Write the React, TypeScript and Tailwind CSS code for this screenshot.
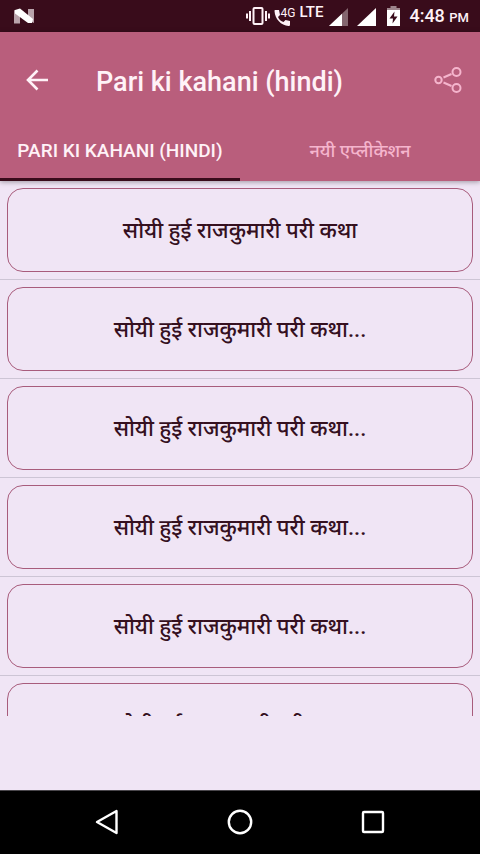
import * as React from "react";

const stories = [
  "सोयी हुई राजकुमारी परी कथा",
  "सोयी हुई राजकुमारी परी कथा...",
  "सोयी हुई राजकुमारी परी कथा...",
  "सोयी हुई राजकुमारी परी कथा...",
  "सोयी हुई राजकुमारी परी कथा...",
  "सोयी हुई राजकुमारी परी कथा...",
];

const tabs = [
  { id: "stories", label: "PARI KI KAHANI (HINDI)", textSize: "text-[19px]" },
  { id: "apps", label: "नयी एप्लीकेशन", textSize: "text-lg" },
];

function StatusBar() {
  return (
    <div className="flex h-8 shrink-0 items-center justify-between bg-[#390c1b] pr-[11px] pl-3.5 text-[#fff2f7]">
      <svg width="20" height="16" viewBox="0 0 20 16" aria-hidden="true">
        <path d="M0 2L6 4V15.500H0Z" fill="#b9a3ab" />
        <path d="M14 1H20V15L14 12Z" fill="#b9a3ab" />
        <path d="M1 2L6 0.500L19 11L18 15H14L1 5.500Z" fill="#fff" />
      </svg>
      <div className="flex h-full items-center">
        {/* Vibrate */}
        <svg width="24" height="20" viewBox="0 0 24 20" fill="none" stroke="#fff2f7" strokeWidth="2" aria-hidden="true">
          <rect x="7.500" y="2" width="9" height="16" rx="1" />
          <path d="M4 5V15M1 7.500V12.500M20 5V15M23 7.500V12.500" />
        </svg>
        {/* 4G call */}
        <div className="ml-1 flex h-full w-[22px] items-start">
          <svg className="mt-2 shrink-0" width="18" height="19" viewBox="0 0 18 19" fill="#fff2f7" aria-hidden="true">
            <path d="M1 2H5L6 7L4 9C5 11.500 7 13.500 9.500 14L11.500 12L16 13V16.500C16 17.500 15.500 18 14.500 18C7 17.500 1 11 0.500 3Q0.500 2 1 2Z" />
          </svg>
          <span className="-ml-[11px] mt-[7px] text-xs leading-3">4G</span>
        </div>
        <span className="ml-1 mb-2 text-[15px] leading-4 font-medium">LTE</span>
        <svg className="ml-1.5 mt-0.5" width="20" height="18" viewBox="0 0 20 18" aria-hidden="true">
          <path d="M0 18L19 0V18Z" fill="#84666f" />
          <path d="M0 18L13 5.700V18Z" fill="#fff" />
        </svg>
        <svg className="ml-2 mt-0.5" width="19" height="18" viewBox="0 0 19 18" aria-hidden="true">
          <path d="M0 18L19 0V18Z" fill="#fff" />
        </svg>
        <svg className="ml-[11px]" width="13" height="20" viewBox="0 0 13 20" aria-hidden="true">
          <path d="M3.500 0H9.500V2H13V5H0V2H3.500Z" fill="#9c858c" />
          <path d="M0 4H13V20H0Z" fill="#fff" />
          <path d="M7.500 5.500L2.500 12.500H6L5.500 17.500L10.500 10.500H7Z" fill="#390c1b" />
        </svg>
        <span className="ml-[9px] pt-0.5 text-lg leading-6 font-medium">
          4:48 <span className="text-[13px]">PM</span>
        </span>
      </div>
    </div>
  );
}

function Toolbar() {
  return (
    <div className="flex h-[88px] items-center pt-2 pr-4 pl-6">
      <button type="button" aria-label="Back" className="shrink-0">
        <svg width="26" height="24" viewBox="0 0 26 24" fill="none" stroke="#fff2f7" strokeWidth="2.600" aria-hidden="true">
          <path d="M24 12H4.500M13.500 2.500L4 12L13.500 21.500" />
        </svg>
      </button>
      <h1 className="ml-[46px] flex-1 truncate pt-1 text-[27px] leading-8 font-medium text-[#fff2f7]">
        Pari ki kahani (hindi)
      </h1>
      <button type="button" aria-label="Share" className="shrink-0">
        <svg width="30" height="28" viewBox="0 0 30 28" fill="none" stroke="#f5b5cd" strokeWidth="2" aria-hidden="true">
          <circle cx="4.500" cy="14" r="3.200" />
          <circle cx="22.500" cy="6" r="4" />
          <circle cx="22.500" cy="22" r="4" />
          <path d="M9.500 11.500L17.500 8M9.500 16.500L17.500 20" />
        </svg>
      </button>
    </div>
  );
}

function NavigationBar() {
  return (
    <nav className="flex h-16 shrink-0 items-center justify-center gap-[106px] border-t border-[#4a474c] bg-black pb-0.5">
      <button type="button" aria-label="Back">
        <svg width="28" height="28" viewBox="0 0 28 28" fill="none" stroke="#fff" strokeWidth="2.400" strokeLinejoin="round" aria-hidden="true">
          <path d="M23.500 3V25L4 14Z" />
        </svg>
      </button>
      <button type="button" aria-label="Home">
        <svg width="26" height="28" viewBox="0 0 26 28" fill="none" stroke="#fff" strokeWidth="2.400" aria-hidden="true">
          <circle cx="13" cy="14" r="11.200" />
        </svg>
      </button>
      <button type="button" aria-label="Recent apps">
        <svg width="28" height="28" viewBox="0 0 28 28" fill="none" stroke="#fff" strokeWidth="2.400" aria-hidden="true">
          <rect x="4" y="4" width="20" height="20" rx="1" />
        </svg>
      </button>
    </nav>
  );
}

export default function App() {
  const [activeTab, setActiveTab] = React.useState("stories");

  return (
    <div className="flex h-screen flex-col bg-[#f0e5f5] font-[Roboto,'Noto_Sans',sans-serif]">
      <StatusBar />

      <header className="z-10 shrink-0 bg-[#b95e7c] shadow-[0_1px_5px_rgba(0,0,0,0.35)]">
        <Toolbar />
        <div role="tablist" className="grid grid-cols-2">
          {tabs.map((tab) => (
            <button
              key={tab.id}
              type="button"
              role="tab"
              aria-selected={activeTab === tab.id}
              onClick={() => setActiveTab(tab.id)}
              className={`h-[61px] border-b-3 pt-1 leading-6 font-medium whitespace-nowrap ${tab.textSize} ${
                activeTab === tab.id ? "border-[#390c1b] text-[#fff2f7]" : "border-transparent text-[#f5b5cd]"
              }`}
            >
              {tab.label}
            </button>
          ))}
        </div>
      </header>

      <main className="min-h-0 flex-1 overflow-hidden">
        <ul>
          {stories.map((story, idx) => (
            <li key={idx} className="border-b border-[#cdc5d5] p-[7px]">
              <button
                type="button"
                className="h-[84px] w-full rounded-2xl border border-[#a85c7c] pt-0.5 text-[22px] leading-8 font-medium text-[#35101f]"
              >
                {story}
              </button>
            </li>
          ))}
        </ul>
      </main>

      {/* Space kept free for the banner */}
      <div className="h-[74px] shrink-0" />

      <NavigationBar />
    </div>
  );
}
